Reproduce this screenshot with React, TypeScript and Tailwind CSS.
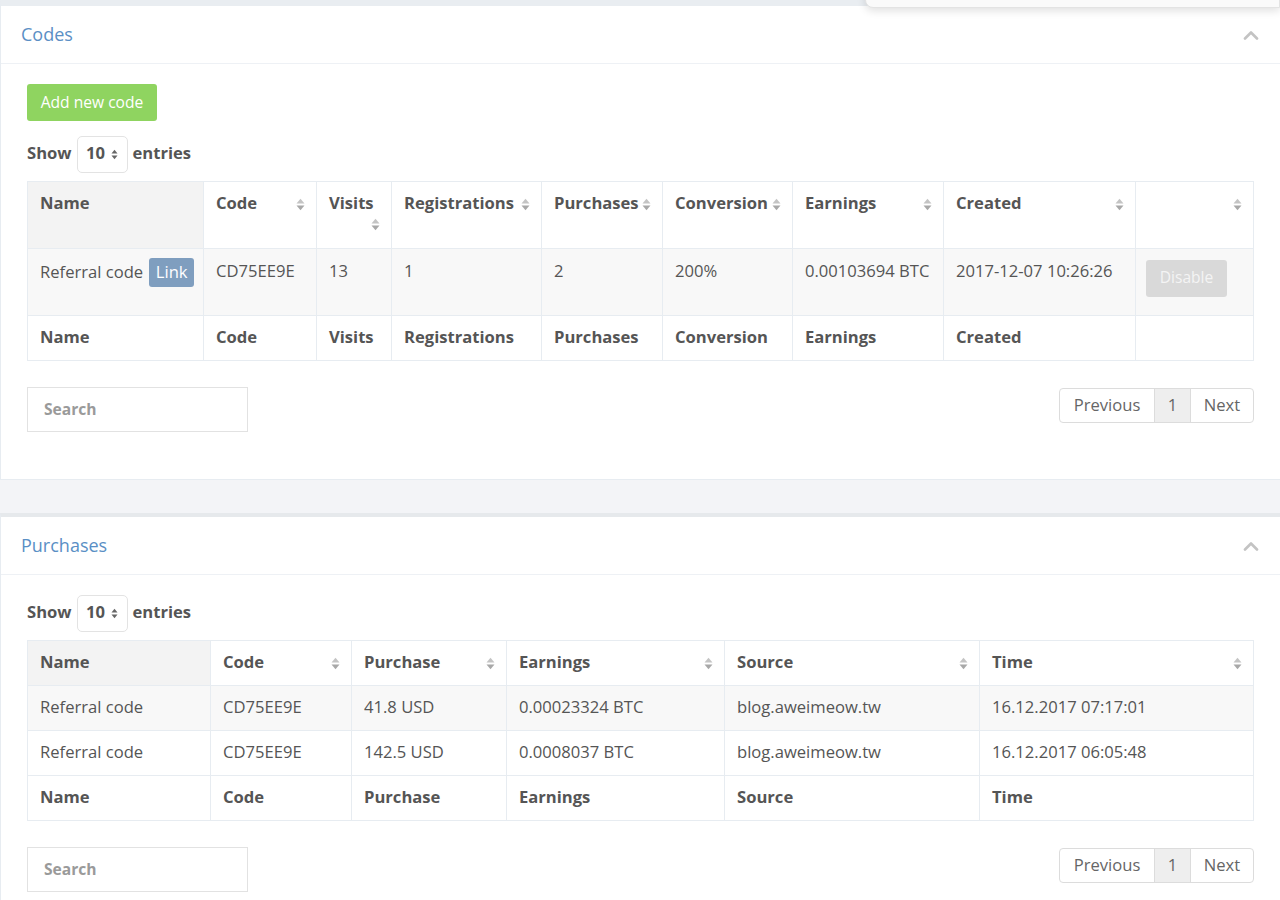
import React from "react";

const SortIcon = () => (
  <svg width="9" height="13" viewBox="0 0 9 13" className="shrink-0">
    <path d="M0.5 5.5 L4.5 0.8 L8.5 5.5 Z" fill="#c4c4c4" />
    <path d="M0.5 7.5 L8.5 7.5 L4.5 12.2 Z" fill="#a8a8a8" />
  </svg>
);

const SelectArrows = () => (
  <svg width="7" height="11" viewBox="0 0 7 11">
    <path d="M0.5 4.5 L3.5 0.8 L6.5 4.5 Z" fill="#666" />
    <path d="M0.5 6.5 L6.5 6.5 L3.5 10.2 Z" fill="#666" />
  </svg>
);

const Chevron = () => (
  <svg width="16" height="10" viewBox="0 0 16 10">
    <path d="M2 8.5 L8 2.5 L14 8.5" stroke="#c3c3c3" strokeWidth="2.6" fill="none" strokeLinecap="round" strokeLinejoin="round" />
  </svg>
);

type Col = { label: string; w: string; sort: boolean; wrapIcon?: boolean; sorted?: boolean };

const HeadCell = ({ c }: { c: Col }) => (
  <th
    className={`${c.w} border border-[#e7ecf1] pl-3 pr-[11px] pt-[10px] pb-[13px] text-left align-top font-bold ${
      c.sorted ? "bg-[#f3f3f3]" : ""
    }`}
  >
    {c.wrapIcon ? (
      <div className="flex flex-col">
        <span className="leading-[21px]">{c.label}</span>
        <div className="flex h-[22px] items-center justify-end">
          <SortIcon />
        </div>
      </div>
    ) : (
      <div className="flex h-[21px] items-center justify-between">
        <span className="whitespace-nowrap leading-[21px]">{c.label}</span>
        {c.sort && (
          <span className="mt-[3px] flex">
            <SortIcon />
          </span>
        )}
      </div>
    )}
  </th>
);

const FootCell = ({ label }: { label: string }) => (
  <th className="h-[45px] border border-[#e7ecf1] px-3 pt-[10px] pb-[13px] text-left align-top font-bold leading-[21px]">{label}</th>
);

const ShowEntries = () => (
  <div className="flex items-center gap-[5px] font-bold text-[#555]">
    <span className="-mt-[2px]">Show</span>
    <div className="flex h-[37px] w-[51px] items-center justify-center gap-[6px] rounded-[5px] border border-[#e3e3e3] bg-white">
      <span className="-mt-[2px]">10</span>
      <SelectArrows />
    </div>
    <span className="-mt-[2px]">entries</span>
  </div>
);

const SearchAndPager = () => (
  <div className="flex items-start justify-between">
    <div className="flex h-[45px] w-[221px] items-center border border-[#e2e2e2] bg-white pl-[16px] text-[15.6px] font-bold text-[#9a9a9a]">
      Search
    </div>
    <div className="mt-px flex h-[35px] overflow-hidden rounded-[4px] border border-[#dcdcdc] text-[#666]">
      <div className="flex w-[94px] items-center justify-center">Previous</div>
      <div className="flex w-[37px] items-center justify-center border-x border-[#dcdcdc] bg-[#eeeeee]">1</div>
      <div className="flex w-[62px] items-center justify-center">Next</div>
    </div>
  </div>
);

const PanelHeader = ({ title }: { title: string }) => (
  <div className="flex h-[58px] items-center justify-between border-b border-[#eef1f5] pl-[20px] pr-[21px]">
    <span className="text-[18px] text-[#5a8fc5]">{title}</span>
    <Chevron />
  </div>
);

const codeCols: Col[] = [
  { label: "Name", w: "w-[176px]", sort: false, sorted: true },
  { label: "Code", w: "w-[113px]", sort: true },
  { label: "Visits", w: "w-[75px]", sort: true, wrapIcon: true },
  { label: "Registrations", w: "w-[150px]", sort: true },
  { label: "Purchases", w: "w-[121px]", sort: true },
  { label: "Conversion", w: "w-[130px]", sort: true },
  { label: "Earnings", w: "w-[151px]", sort: true },
  { label: "Created", w: "w-[192px]", sort: true },
  { label: "", w: "w-[118px]", sort: true },
];

const purchCols: Col[] = [
  { label: "Name", w: "w-[183px]", sort: false, sorted: true },
  { label: "Code", w: "w-[141px]", sort: true },
  { label: "Purchase", w: "w-[155px]", sort: true },
  { label: "Earnings", w: "w-[218px]", sort: true },
  { label: "Source", w: "w-[255px]", sort: true },
  { label: "Time", w: "w-[274px]", sort: true },
];

const purchRows = [
  ["Referral code", "CD75EE9E", "41.8 USD", "0.00023324 BTC", "blog.aweimeow.tw", "16.12.2017 07:17:01"],
  ["Referral code", "CD75EE9E", "142.5 USD", "0.0008037 BTC", "blog.aweimeow.tw", "16.12.2017 06:05:48"],
];

const td = "border border-[#e7ecf1] px-3 pt-[11px] align-top leading-[21px] whitespace-nowrap";

export default function App() {
  return (
    <div
      className="relative min-h-[900px] bg-[#f3f4f7] text-[16.6px] text-[#555]"
      style={{ fontFamily: '"Open Sans", "Liberation Sans", sans-serif' }}
    >
      {/* overlay edge at top right */}
      <div className="absolute right-0 top-[-10px] z-10 h-[18px] w-[415px] rounded-bl-[8px] border border-[#e3e3e3] bg-[#fafafa] shadow-[0_3px_8px_rgba(0,0,0,0.12)]" />

      {/* Codes panel */}
      <div className="border-t-[6px] border-[#e9edf1] border-l border-l-[#e7ecf1] bg-white">
        <PanelHeader title="Codes" />
        <div className="px-[26px] pb-[47px] pt-[20px]">
          <button className="h-[37px] w-[130px] rounded-[3px] bg-[#8fd460] text-[15.6px] text-white">Add new code</button>
          <div className="mt-[15px]">
            <ShowEntries />
          </div>
          <table className="mt-[8px] w-[1226px] table-fixed border-collapse">
            <thead>
              <tr>
                {codeCols.map((c, i) => (
                  <HeadCell key={i} c={c} />
                ))}
              </tr>
            </thead>
            <tbody>
              <tr className="bg-[#f8f8f8]">
                <td className="h-[67px] border border-[#e7ecf1] px-3 pt-[9px] align-top leading-[21px]">
                  <div className="flex items-center gap-[6px]">
                    <span className="-mt-[2px] whitespace-nowrap">Referral code</span>
                    <span className="flex h-[29px] w-[45px] shrink-0 items-center justify-center rounded-[3px] bg-[#7f9ebf] pb-[2px] text-white">Link</span>
                  </div>
                </td>
                <td className={td}>CD75EE9E</td>
                <td className={td}>13</td>
                <td className={td}>1</td>
                <td className={td}>2</td>
                <td className={td}>200%</td>
                <td className={td}>0.00103694 BTC</td>
                <td className={td}>2017-12-07 10:26:26</td>
                <td className="border border-[#e7ecf1] px-[10px] pt-[11px] align-top">
                  <div className="flex h-[37px] w-[81px] items-center justify-center rounded-[3px] bg-[#d9d9d9] pb-[1px] text-[15.6px] text-[#f4f4f4]">Disable</div>
                </td>
              </tr>
            </tbody>
            <tfoot>
              <tr>
                {["Name", "Code", "Visits", "Registrations", "Purchases", "Conversion", "Earnings", "Created", ""].map((l, i) => (
                  <FootCell key={i} label={l} />
                ))}
              </tr>
            </tfoot>
          </table>
          <div className="mt-[26px]">
            <SearchAndPager />
          </div>
        </div>
      </div>

      <div className="h-[34px] border-t border-[#e7ecf1]" />

      {/* Purchases panel */}
      <div className="border-t-[4px] border-[#e6e9ec] border-l border-l-[#e7ecf1] bg-white">
        <PanelHeader title="Purchases" />
        <div className="px-[26px] pb-[20px] pt-[20px]">
          <ShowEntries />
          <table className="mt-[8px] w-[1226px] table-fixed border-collapse">
            <thead>
              <tr>
                {purchCols.map((c, i) => (
                  <HeadCell key={i} c={c} />
                ))}
              </tr>
            </thead>
            <tbody>
              {purchRows.map((r, ri) => (
                <tr key={ri} className={ri === 0 ? "bg-[#f8f8f8]" : ""}>
                  {r.map((v, i) => (
                    <td key={i} className="h-[45px] border border-[#e7ecf1] px-3 pt-[10px] pb-[13px] align-top leading-[21px]">
                      {v}
                    </td>
                  ))}
                </tr>
              ))}
            </tbody>
            <tfoot>
              <tr>
                {["Name", "Code", "Purchase", "Earnings", "Source", "Time"].map((l, i) => (
                  <FootCell key={i} label={l} />
                ))}
              </tr>
            </tfoot>
          </table>
          <div className="mt-[26px]">
            <SearchAndPager />
          </div>
        </div>
      </div>
    </div>
  );
}
